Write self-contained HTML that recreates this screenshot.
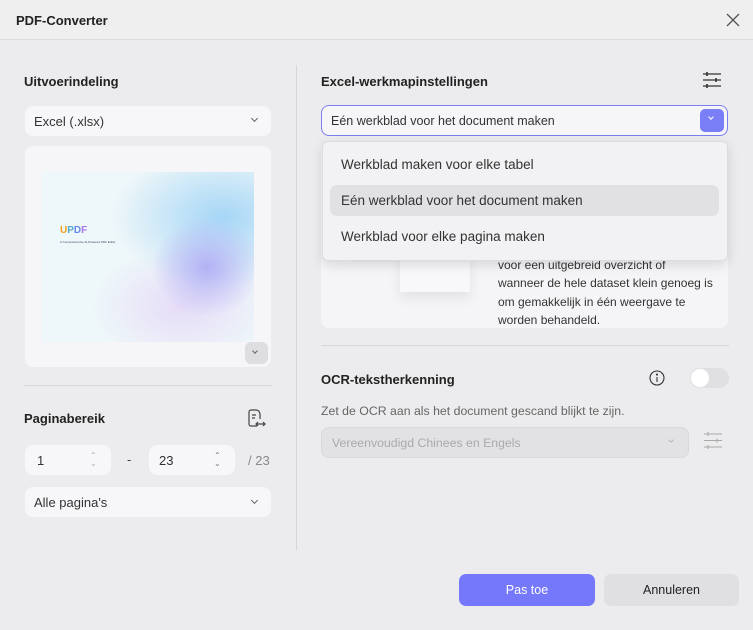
<!DOCTYPE html>
<html><head><style>
*{box-sizing:border-box;margin:0;padding:0}
body{width:753px;height:630px;background:#ececee;font-family:"Liberation Sans",sans-serif;color:#222;position:relative;overflow:hidden;font-size:13px}
.a{position:absolute}
.h{font-weight:bold;font-size:13px;color:#222}
.sel{position:absolute;background:#f7f7f9;border-radius:8px;font-size:13px;padding-left:9px;display:flex;align-items:center;color:#333}
.chev{position:absolute;width:6px;height:6px;border-right:1.3px solid #666;border-bottom:1.3px solid #666;transform:rotate(45deg)}
</style></head><body>
<div class="a" style="left:0;top:0;width:753px;height:40px;background:#efeff0;border-bottom:1px solid #dcdcde"></div>
<div class="a h" style="left:16px;top:13px;font-size:13px">PDF-Converter</div>
<svg class="a" style="left:726px;top:13px" width="14" height="14"><path d="M1 1L13 13M13 1L1 13" stroke="#555" stroke-width="1.3"/></svg>

<div class="a h" style="left:24px;top:74px">Uitvoerindeling</div>
<div class="sel" style="left:25px;top:106px;width:246px;height:30px">Excel (.xlsx)</div>
<div class="chev" style="left:252px;top:116px;width:5px;height:5px"></div>
<div class="a" style="left:25px;top:146px;width:246px;height:221px;background:#f6f6f8;border-radius:8px"></div>
<div class="a" style="left:42px;top:172px;width:212px;height:170px;background:radial-gradient(ellipse 55px 50px at 165px 95px,#b3b2f5,transparent),radial-gradient(ellipse 110px 70px at 180px 45px,#a6d6f6,transparent),radial-gradient(ellipse 90px 60px at 140px 135px,#e6dcf8,transparent),#eef7f9;"></div>
<div class="a" style="left:60px;top:225px;font-size:10px;font-weight:bold;color:#f0a020">U<span style="color:#5ac">P</span><span style="color:#68e">D</span><span style="color:#a7e">F</span></div>
<div class="a" style="left:60px;top:240px;font-size:3px;color:#446">A Comprehensive AI-Powered PDF Editor</div>
<div class="a" style="left:245px;top:342px;width:23px;height:22px;background:#dedee1;border-radius:6px"></div>
<div class="chev" style="left:253px;top:349px;width:4px;height:4px"></div>
<div class="a" style="left:24px;top:385px;width:248px;height:1px;background:#d6d6d9"></div>
<div class="a h" style="left:24px;top:411px">Paginabereik</div>
<svg class="a" style="left:247px;top:409px" width="20" height="20" fill="none" stroke="#444" stroke-width="1.2"><path d="M10 17H4a2 2 0 0 1-2-2V3a2 2 0 0 1 2-2h5a4 4 0 0 1 4 4v5M5 6h4M5 9h3M9 15h9M11 13l-2 2 2 2M16 13l2 2-2 2"/></svg>
<div class="sel" style="left:25px;top:445px;width:86px;height:30px;padding-left:12px">1</div>
<div class="a" style="left:90px;top:452px;font-size:8px;color:#aaa;line-height:8px">⌃<br>⌄</div>
<div class="a" style="left:127px;top:452px;color:#444">-</div>
<div class="sel" style="left:149px;top:445px;width:86px;height:30px;padding-left:10px">23</div>
<div class="a" style="left:214px;top:452px;font-size:8px;color:#777;line-height:8px">⌃<br>⌄</div>
<div class="a" style="left:248px;top:453px;color:#888">/ 23</div>
<div class="sel" style="left:25px;top:487px;width:246px;height:30px">Alle pagina's</div>
<div class="chev" style="left:252px;top:498px;width:5px;height:5px"></div>

<div class="a" style="left:296px;top:65px;width:1px;height:485px;background:#d6d6d9"></div>

<div class="a h" style="left:321px;top:74px">Excel-werkmapinstellingen</div>
<svg class="a" style="left:703px;top:72px" width="18" height="16" stroke="#333" stroke-width="1.2"><path d="M0 2h18M0 8h18M0 14h18"/><path d="M4 0v4M13 6v4M4 12v4" stroke-width="1.6"/></svg>
<div class="sel" style="left:321px;top:105px;width:407px;height:31px;border:1px solid #7b7ff0;background:#f6f6f8;font-size:12.5px">Eén werkblad voor het document maken</div>
<div class="a" style="left:700px;top:109px;width:24px;height:23px;background:#7a7ff8;border-radius:5px"></div>
<div class="chev" style="left:709px;top:115px;width:4px;height:4px;border-color:#fff"></div>

<div class="a" style="left:321px;top:145px;width:407px;height:183px;background:#f5f5f7;border-radius:8px"></div>
<div class="a" style="left:352px;top:240px;width:50px;height:22px;background:#ededef"></div>
<div class="a" style="left:400px;top:250px;width:70px;height:42px;background:#f8f8fa;box-shadow:0 6px 12px rgba(0,0,0,.08)"></div>
<div class="a" style="left:498px;top:256px;font-size:12px;line-height:18.3px;color:#333">voor een uitgebreid overzicht of<br>wanneer de hele dataset klein genoeg is<br>om gemakkelijk in één weergave te<br>worden behandeld.</div>

<div class="a" style="left:322px;top:141px;width:406px;height:120px;background:#f2f2f4;border-radius:6px;border:1px solid #dcdcdf;box-shadow:0 4px 12px rgba(0,0,0,.12)"></div>
<div class="a" style="left:330px;top:185px;width:389px;height:31px;background:#e1e1e4;border-radius:7px"></div>
<div class="a" style="left:341px;top:157px;font-size:13.5px;color:#333">Werkblad maken voor elke tabel</div>
<div class="a" style="left:341px;top:193px;font-size:13.5px;color:#333">Eén werkblad voor het document maken</div>
<div class="a" style="left:341px;top:229px;font-size:13.5px;color:#333">Werkblad voor elke pagina maken</div>

<div class="a" style="left:321px;top:345px;width:408px;height:1px;background:#d6d6d9"></div>
<div class="a h" style="left:321px;top:372px">OCR-tekstherkenning</div>
<svg class="a" style="left:649px;top:370px" width="16" height="16" fill="none" stroke="#333" stroke-width="1.1"><circle cx="8" cy="8" r="7"/><path d="M8 7v5"/><circle cx="8" cy="4.6" r=".5" fill="#333"/></svg>
<div class="a" style="left:690px;top:368px;width:39px;height:20px;background:#e0e0e3;border-radius:10px"></div>
<div class="a" style="left:691px;top:369px;width:18px;height:18px;background:#fff;border-radius:50%"></div>
<div class="a" style="left:321px;top:404px;font-size:12.3px;color:#666">Zet de OCR aan als het document gescand blijkt te zijn.</div>
<div class="sel" style="left:321px;top:427px;width:368px;height:31px;background:#e2e2e5;border:1px solid #d8d8db;color:#aaa;font-size:12.3px;padding-left:10px">Vereenvoudigd Chinees en Engels</div>
<div class="chev" style="left:669px;top:438px;width:4px;height:4px;border-color:#bbb"></div>
<svg class="a" style="left:704px;top:432px" width="18" height="17" stroke="#aaa" stroke-width="1.1"><path d="M0 2h18M0 8.5h18M0 15h18"/><path d="M4 0v4M13 6.5v4M4 13v4"/></svg>

<div class="a" style="left:459px;top:574px;width:136px;height:32px;background:#7578fb;border-radius:7px;color:#fff;font-size:12.5px;text-align:center;line-height:32px">Pas toe</div>
<div class="a" style="left:604px;top:574px;width:135px;height:32px;background:#e0e0e3;border-radius:7px;color:#222;font-size:12.5px;text-align:center;line-height:32px">Annuleren</div>
</body></html>
